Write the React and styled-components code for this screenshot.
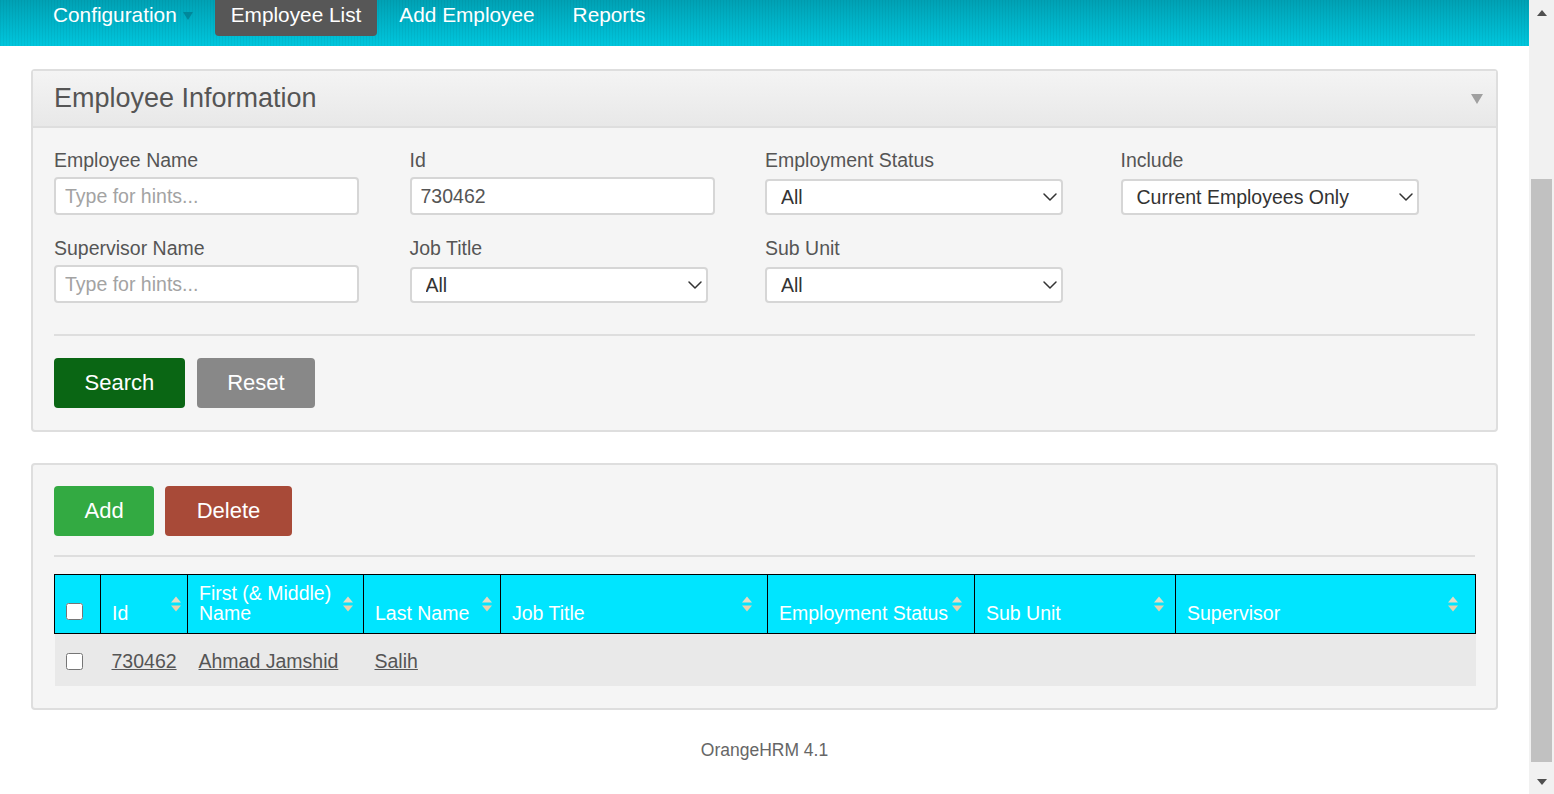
import React from 'react'
import styled, { createGlobalStyle } from 'styled-components'
import { ChevronDown } from 'lucide-react'

const GlobalStyle = createGlobalStyle`
  html, body {
    margin: 0;
    padding: 0;
    background: #fff;
    overflow: hidden;
  }
  body {
    font-family: "Liberation Sans", Arial, sans-serif;
  }
`

const Screen = styled.div`
  display: flex;
  height: 794px;
`

const Main = styled.div`
  width: 1529px;
  display: flex;
  flex-direction: column;
`

const TopNav = styled.nav`
  height: 46px;
  display: flex;
  align-items: flex-start;
  gap: 6px;
  padding-left: 37px;
  box-sizing: border-box;
  background:
    repeating-linear-gradient(90deg, rgba(0, 0, 0, 0.045) 0 1px, transparent 1px 3px),
    linear-gradient(#00a1b4, #00c6dd);
`

const NavItem = styled.a`
  display: flex;
  align-items: center;
  gap: 6px;
  height: 36px;
  padding: 0 16px 6px;
  box-sizing: border-box;
  color: #fff;
  font-size: 20.8px;
  text-decoration: none;
  border-radius: 0 0 4px 4px;
  background: ${p => (p.$active ? '#575757' : 'transparent')};
`

const Caret = styled.span`
  width: 0;
  height: 0;
  margin-top: 2px;
  border-left: 5px solid transparent;
  border-right: 5px solid transparent;
  border-top: 8px solid #00889b;
`

const Content = styled.div`
  padding: 23px 31px 0;
`

const Panel = styled.section`
  border: 2px solid #dedede;
  border-radius: 4px;
  background: #f5f5f5;
  margin-bottom: ${p => p.$gap || 0}px;
`

const PanelHead = styled.div`
  height: 55px;
  display: flex;
  align-items: center;
  justify-content: space-between;
  padding: 0 13px 0 21px;
  background: linear-gradient(#f4f4f4, #e8e8e8);
  border-bottom: 2px solid #dedede;
`

const PanelTitle = styled.h1`
  margin: 0;
  font-size: 27px;
  font-weight: normal;
  color: #555;
`

const Toggle = styled.span`
  width: 0;
  height: 0;
  border-left: 6px solid transparent;
  border-right: 6px solid transparent;
  border-top: 10px solid #a0a0a0;
`

const PanelBody = styled.div`
  padding: 21px 21px ${p => p.$bottom || 21}px;
`

const FieldGrid = styled.div`
  display: grid;
  grid-template-columns: repeat(4, 355.5px);
  row-gap: 22px;
`

const Field = styled.div`
  display: flex;
  flex-direction: column;
  align-items: flex-start;
`

const Label = styled.label`
  font-size: 19.5px;
  line-height: 22px;
  color: #555;
  margin-bottom: 6px;
`

const TextInput = styled.input`
  width: 305px;
  height: 38px;
  box-sizing: border-box;
  border: 2px solid #d6d6d6;
  border-radius: 4px;
  background: #fff;
  padding: 0 9px;
  font-family: inherit;
  font-size: 19.5px;
  color: #555;
  outline: none;

  &::placeholder {
    color: #a3a3a3;
  }
`

const SelectWrap = styled.div`
  position: relative;
  width: 298px;
  height: 36px;
  margin-top: 2px;

  svg {
    position: absolute;
    right: 1px;
    top: 50%;
    transform: translateY(-50%);
    pointer-events: none;
  }
`

const Select = styled.select`
  appearance: none;
  width: 100%;
  height: 100%;
  box-sizing: border-box;
  border: 2px solid #d6d6d6;
  border-radius: 4px;
  background: #fff;
  padding: 0 14px;
  font-family: inherit;
  font-size: 19.5px;
  color: #333;
  outline: none;
`

const Divider = styled.hr`
  border: 0;
  height: 2px;
  background: #dedede;
  margin: ${p => p.$top}px 0 ${p => p.$bottom}px;
`

const ButtonRow = styled.div`
  display: flex;
  gap: ${p => p.$gap || 12}px;
`

const colors = {
  search: '#0a6614',
  reset: '#888888',
  add: '#33aa42',
  delete: '#a84a38',
}

const Button = styled.button`
  height: 50px;
  padding: 0 ${p => p.$pad || 30.5}px;
  border: 0;
  border-radius: 4px;
  background: ${p => colors[p.$kind]};
  color: #fff;
  font-family: inherit;
  font-size: 22px;
  cursor: pointer;
`

const Table = styled.table`
  width: 1421px;
  table-layout: fixed;
  border-collapse: collapse;
`

const Th = styled.th`
  position: relative;
  background: #00e5ff;
  color: #fff;
  font-weight: normal;
  font-size: 19.5px;
  line-height: 19.5px;
  text-align: left;
  vertical-align: bottom;
  padding: 9px 22px 10px 11px;
  border: 1px solid #000;
`

const Sort = styled.span`
  position: absolute;
  right: ${p => p.$right}px;
  top: 50%;
  transform: translateY(-50%);
  display: flex;
  flex-direction: column;
  gap: 3px;

  &::before,
  &::after {
    content: '';
    width: 0;
    height: 0;
    border-left: 5.5px solid transparent;
    border-right: 5.5px solid transparent;
  }
  &::before {
    border-bottom: 6px solid #e6dcc4;
  }
  &::after {
    border-top: 6px solid #e8d0ac;
  }
`

const Check = styled.input`
  display: block;
  width: 17px;
  height: 17px;
  margin: 0 0 ${p => p.$lift || 0}px;
`

const Td = styled.td`
  height: 52px;
  padding: 3px 11px 0;
  box-sizing: border-box;
  background: #e9e9e9;
  font-size: 19.5px;
  color: #555;
  vertical-align: middle;
`

const Link = styled.a`
  color: #555;
  text-decoration: underline;
`

const Footer = styled.footer`
  margin-top: 30px;
  text-align: center;
  font-size: 17.5px;
  line-height: 20px;
  color: #666;
`

const ScrollBar = styled.div`
  width: 25px;
  background: #f1f1f1;
  display: flex;
  flex-direction: column;
  align-items: center;
`

const ScrollArrow = styled.div`
  height: 25px;
  display: flex;
  align-items: center;
  justify-content: center;

  &::before {
    content: '';
    width: 0;
    height: 0;
    border-left: 5.5px solid transparent;
    border-right: 5.5px solid transparent;
    ${p => (p.$down ? 'border-top: 6px solid #505050;' : 'border-bottom: 6px solid #505050;')}
  }
`

const Thumb = styled.div`
  width: 21px;
  height: 583px;
  margin-top: 154px;
  background: #c1c1c1;
`

const Spacer = styled.div`
  flex: 1;
`

const columns = [
  { title: 'Id', width: 87, sort: 6 },
  { title: 'First (& Middle) Name', width: 176, sort: 10 },
  { title: 'Last Name', width: 137, sort: 8 },
  { title: 'Job Title', width: 267, sort: 15 },
  { title: 'Employment Status', width: 207, sort: 12 },
  { title: 'Sub Unit', width: 201, sort: 11 },
  { title: 'Supervisor', width: 300, sort: 17 },
]

const Dropdown = ({ value }) => (
  <SelectWrap>
    <Select defaultValue={value}>
      <option>{value}</option>
    </Select>
    <ChevronDown size={24} strokeWidth={1.5} color="#333" />
  </SelectWrap>
)

export default function App() {
  return (
    <>
      <GlobalStyle />
      <Screen>
        <Main>
          <TopNav>
            <NavItem href="#">Configuration <Caret /></NavItem>
            <NavItem href="#" $active>Employee List</NavItem>
            <NavItem href="#">Add Employee</NavItem>
            <NavItem href="#">Reports</NavItem>
          </TopNav>

          <Content>
            <Panel $gap={31}>
              <PanelHead>
                <PanelTitle>Employee Information</PanelTitle>
                <Toggle />
              </PanelHead>
              <PanelBody $bottom={22}>
                <FieldGrid>
                  <Field>
                    <Label>Employee Name</Label>
                    <TextInput placeholder="Type for hints..." />
                  </Field>
                  <Field>
                    <Label>Id</Label>
                    <TextInput defaultValue="730462" />
                  </Field>
                  <Field>
                    <Label>Employment Status</Label>
                    <Dropdown value="All" />
                  </Field>
                  <Field>
                    <Label>Include</Label>
                    <Dropdown value="Current Employees Only" />
                  </Field>
                  <Field>
                    <Label>Supervisor Name</Label>
                    <TextInput placeholder="Type for hints..." />
                  </Field>
                  <Field>
                    <Label>Job Title</Label>
                    <Dropdown value="All" />
                  </Field>
                  <Field>
                    <Label>Sub Unit</Label>
                    <Dropdown value="All" />
                  </Field>
                </FieldGrid>
                <Divider $top={31} $bottom={22} />
                <ButtonRow>
                  <Button $kind="search">Search</Button>
                  <Button $kind="reset">Reset</Button>
                </ButtonRow>
              </PanelBody>
            </Panel>

            <Panel>
              <PanelBody $bottom={22}>
                <ButtonRow $gap={11}>
                  <Button $kind="add">Add</Button>
                  <Button $kind="delete" $pad={31.5}>Delete</Button>
                </ButtonRow>
                <Divider $top={19} $bottom={17} />
                <Table>
                  <colgroup>
                    <col style={{ width: 46 }} />
                    {columns.map(c => (
                      <col key={c.title} style={{ width: c.width }} />
                    ))}
                  </colgroup>
                  <thead>
                    <tr>
                      <Th>
                        <Check type="checkbox" $lift={3} />
                      </Th>
                      {columns.map(c => (
                        <Th key={c.title}>
                          {c.title}
                          <Sort $right={c.sort} />
                        </Th>
                      ))}
                    </tr>
                  </thead>
                  <tbody>
                    <tr>
                      <Td><Check type="checkbox" /></Td>
                      <Td><Link href="#">730462</Link></Td>
                      <Td><Link href="#">Ahmad Jamshid</Link></Td>
                      <Td><Link href="#">Salih</Link></Td>
                      <Td />
                      <Td />
                      <Td />
                      <Td />
                    </tr>
                  </tbody>
                </Table>
              </PanelBody>
            </Panel>

            <Footer>OrangeHRM 4.1</Footer>
          </Content>
        </Main>

        <ScrollBar>
          <ScrollArrow />
          <Thumb />
          <Spacer />
          <ScrollArrow $down />
        </ScrollBar>
      </Screen>
    </>
  )
}
